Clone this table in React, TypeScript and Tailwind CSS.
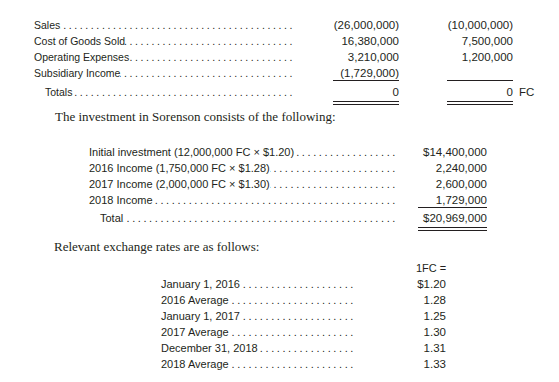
const sans = "font-['Liberation_Sans',Arial,sans-serif]";
const DOTS = ".".repeat(70);

function Leader({ label, indent = false }: { label: string; indent?: boolean }) {
  return (
    <div className={`flex flex-1 min-w-0 ${indent ? "pl-[11px]" : ""}`}>
      <span className="whitespace-nowrap">{label}</span>
      <span className="flex flex-1 justify-end overflow-hidden whitespace-nowrap tracking-[2.6px] pl-[3px]">
        {DOTS}
      </span>
    </div>
  );
}

function DoubleRule({ w }: { w: string }) {
  return <div className={`h-[4px] border-y border-[#231f20] ${w}`} />;
}

const summary = [
  { label: "Sales", a: "(26,000,000)", b: "(10,000,000)" },
  { label: "Cost of Goods Sold", a: "16,380,000", b: "7,500,000" },
  { label: "Operating Expenses", a: "3,210,000", b: "1,200,000" },
  { label: "Subsidiary Income", a: "(1,729,000)", b: "" },
];

const investment = [
  { label: "Initial investment (12,000,000 FC \u00d7 $1.20)", v: "$14,400,000" },
  { label: "2016 Income (1,750,000 FC \u00d7 $1.28)", v: "2,240,000" },
  { label: "2017 Income (2,000,000 FC \u00d7 $1.30)", v: "2,600,000" },
  { label: "2018 Income", v: "1,729,000" },
];

const rates = [
  { label: "January 1, 2016", v: "$1.20" },
  { label: "2016 Average", v: "1.28" },
  { label: "January 1, 2017", v: "1.25" },
  { label: "2017 Average", v: "1.30" },
  { label: "December 31, 2018", v: "1.31" },
  { label: "2018 Average", v: "1.33" },
];

export default function App() {
  return (
    <div className={`w-[559px] h-[382px] bg-white text-[#231f20] overflow-hidden ${sans}`}>
      {/* Consolidation worksheet summary */}
      <div className="pt-[17px] pl-[34px] text-[10.5px] leading-[16px]">
        {summary.map((r, i) => (
          <div key={r.label} className="flex h-[16px]">
            <div className="flex w-[261px]">
              <Leader label={r.label} />
            </div>
            <div className="w-[104px] flex justify-end text-[11.5px]">
              <div className={`w-[66px] text-right whitespace-nowrap ${i === 3 ? "border-b border-[#231f20] h-[16px]" : ""}`}>
                {r.a}
              </div>
            </div>
            <div className="w-[114px] flex justify-end text-[11.5px]">
              <div className={`w-[66px] text-right whitespace-nowrap ${i === 3 ? "border-b border-[#231f20] h-[16px]" : ""}`}>
                {r.b}
              </div>
            </div>
          </div>
        ))}
        <div className="flex h-[19px] items-end">
          <div className="flex w-[261px]">
            <Leader label="Totals" indent />
          </div>
          <div className="w-[104px] flex justify-end text-[11.5px]">
            <div className="w-[66px] text-right">0</div>
          </div>
          <div className="w-[114px] flex justify-end text-[11.5px]">
            <div className="w-[66px] text-right">0</div>
          </div>
          <div className="pl-[6px] text-[11.5px]">FC</div>
        </div>
        <div className="flex pt-[1px]">
          <div className="w-[261px]" />
          <div className="w-[104px] flex justify-end">
            <DoubleRule w="w-[66px]" />
          </div>
          <div className="w-[114px] flex justify-end">
            <DoubleRule w="w-[66px]" />
          </div>
        </div>
      </div>

      <p className="pl-[55px] pt-[3px] font-['Liberation_Serif',serif] text-[13px] leading-[18px]">
        The investment in Sorenson consists of the following:
      </p>

      {/* Investment breakdown */}
      <div className="pt-[18px] pl-[89px] text-[11px] leading-[16px]">
        {investment.map((r, i) => (
          <div key={r.label} className="flex h-[16px]">
            <div className="flex w-[309px]">
              <Leader label={r.label} />
            </div>
            <div className={`ml-[20px] w-[69px] text-right text-[11.5px] whitespace-nowrap ${i === 3 ? "border-b border-[#231f20] h-[16px]" : ""}`}>
              {r.v}
            </div>
          </div>
        ))}
        <div className="flex h-[18px] items-end">
          <div className="flex w-[309px]">
            <Leader label="Total" indent />
          </div>
          <div className="ml-[20px] w-[69px] text-right text-[11.5px] whitespace-nowrap">$20,969,000</div>
        </div>
        <div className="flex pt-[1px]">
          <div className="w-[329px]" />
          <DoubleRule w="w-[69px]" />
        </div>
      </div>

      <p className="pl-[54px] pt-[7px] font-['Liberation_Serif',serif] text-[13px] leading-[18px]">
        Relevant exchange rates are as follows:
      </p>

      {/* Exchange rates */}
      <div className="pt-[4px] pl-[161px] text-[11px] leading-[16px]">
        <div className="flex h-[16px]">
          <div className="w-[195px]" />
          <div className="ml-[60px] w-[30px] text-right whitespace-nowrap text-[11px]">1FC =</div>
        </div>
        {rates.map((r) => (
          <div key={r.label} className="flex h-[16px]">
            <div className="flex w-[195px]">
              <Leader label={r.label} />
            </div>
            <div className="ml-[60px] w-[30px] text-right text-[11.5px]">{r.v}</div>
          </div>
        ))}
      </div>
    </div>
  );
}
